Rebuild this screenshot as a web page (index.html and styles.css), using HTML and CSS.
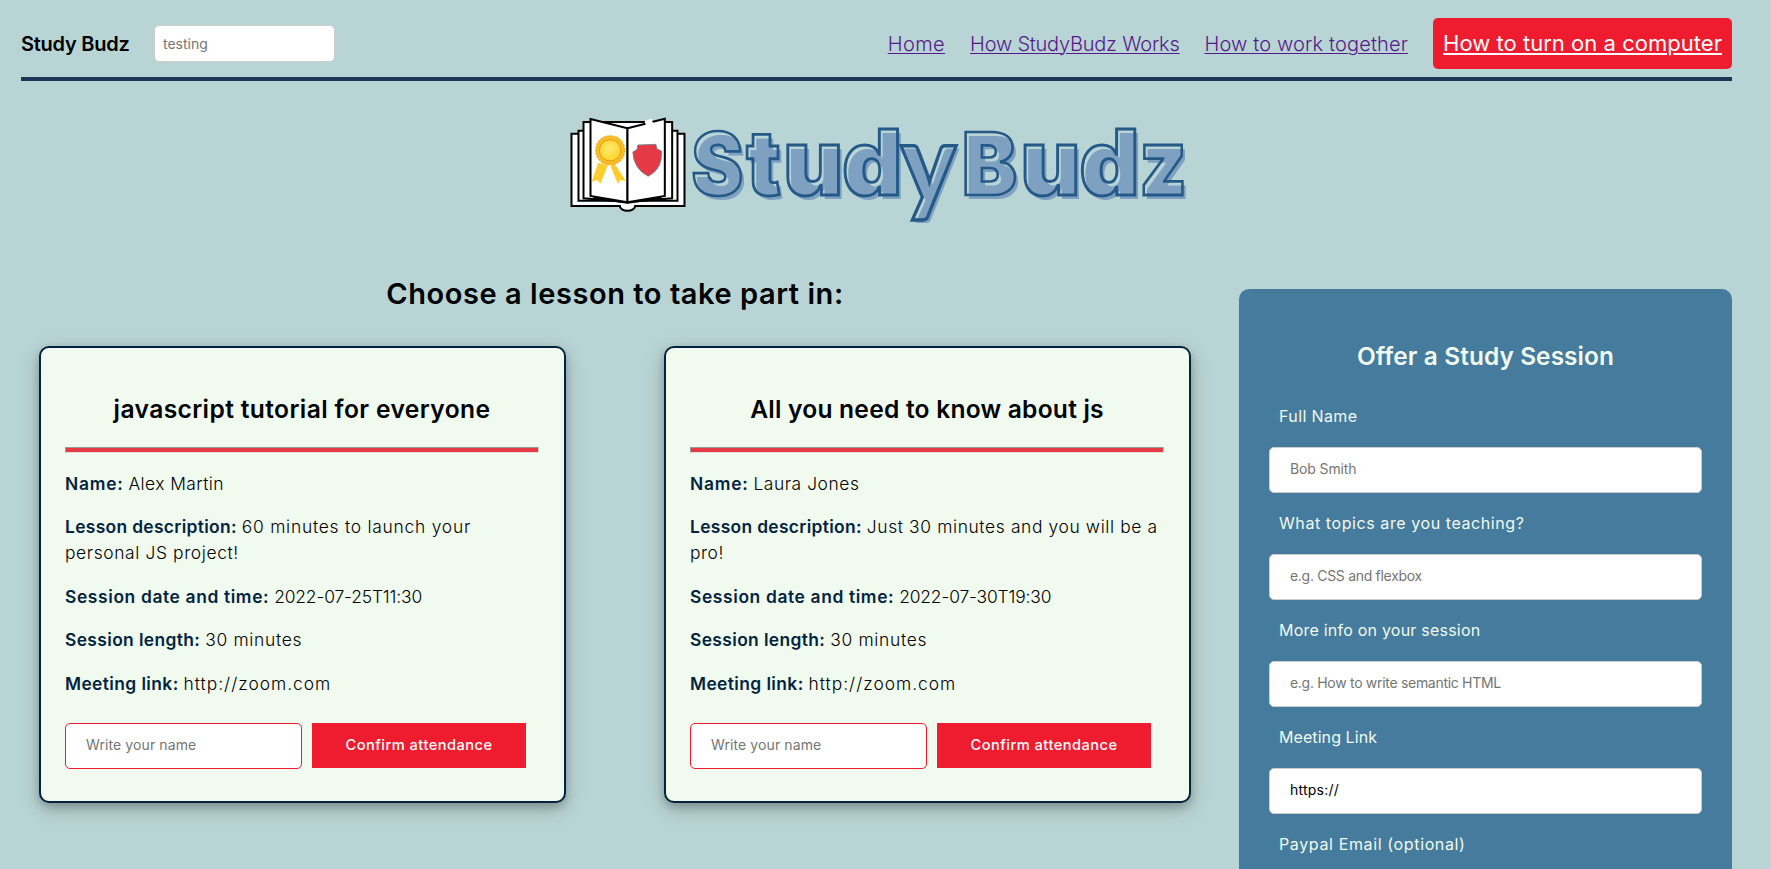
FILE: index.html
```
<!DOCTYPE html>
<html lang="en">
<head>
<meta charset="utf-8">
<title>Study Budz</title>
<link rel="stylesheet" href="styles.css">
</head>
<body>
<header class="header">
  <span class="brand">Study Budz</span>
  <input class="search" placeholder="testing">
  <nav class="nav">
    <a class="ls-40" href="#">Home</a>
    <a class="ls-n22" href="#">How StudyBudz Works</a>
    <a class="ls-14" href="#">How to work together</a>
    <a class="nav-cta" href="#">How to turn on a computer</a>
  </nav>
</header>

<svg class="logo" viewBox="546.5 105 660 130" role="img" aria-label="StudyBudz">
  <defs>
    <radialGradient id="gold" cx=".45" cy=".4" r=".6">
      <stop offset="0" stop-color="#ffe96e"/><stop offset="1" stop-color="#ffd52e"/>
    </radialGradient>
    <g id="word">
      <text transform="translate(691 195.4) scale(.9 1)">S</text>
      <text transform="translate(745.8 195.4) scale(1 1.04)">t</text>
      <text transform="translate(782.8 195.4) scale(1.07 1.06)">u</text>
      <text transform="translate(841.8 195.4) scale(1.08 1.05)">d</text>
      <text class="logo-y" transform="translate(900.6 201.6) scale(1.2 1.27)">y</text>
      <text transform="translate(961.3 195.4) scale(.96 1)">B</text>
      <text transform="translate(1020.1 195.4) scale(1.07 1.06)">u</text>
      <text transform="translate(1079.1 195.4) scale(1.08 1.05)">d</text>
      <text transform="translate(1138.8 195.4) scale(.94 1.06)">z</text>
    </g>
  </defs>
  <g transform="translate(565 110) scale(.3333)" stroke="#000" stroke-width="6" fill="#fff">
    <path d="M18 71h339v217H209a23 14 0 0 1-46 0H18z"/>
    <path d="M39 62h297v210H39z"/>
    <path d="M54 36h266v229l-134 11L54 265z"/>
    <path d="M84 263l102 14 102-14" stroke-width="8"/>
    <path d="M75 27l111 28v222L75 258z"/>
    <path d="M186 55L298 27v231l-112 19z" stroke="none"/>
    <path d="M240 41l22-6V48l-22 4z" stroke="none"/>
    <path d="M238 32l22-6v12l-22 6z" stroke="none"/>
    <path d="M186 55l54-14M262 35l36-9v232l-112 19V55" fill="none"/>
    <path d="M98 158l-19 57 16-6 10 12 22-55zM145 158l36 54-16-2-8 12-21-52z" fill="#ffce2c" stroke="none"/>
    <circle cx="134" cy="121" r="43" fill="#f8bd25" stroke="#f0b01e" stroke-width="5" stroke-dasharray="7 3"/>
    <circle cx="134" cy="121" r="32" fill="#ffd83b" stroke="#dc9d18" stroke-width="3"/>
    <circle cx="134" cy="121" r="27" fill="url(#gold)" stroke="none"/>
    <path d="M112 135l40-35M121 141l34-31" stroke="#fff08a" stroke-width="3" opacity=".5"/>
    <path d="M217 105l54-2 4 14 13 6q4 54-40 76-44-23-46-73l13-8z" fill="#e63946" stroke="#6c8790" stroke-width="2.5"/>
  </g>
  <use class="word-fill-shadow" href="#word" transform="translate(3.2 3.2)"/>
  <use class="word-line" href="#word"/>
</svg>

<main class="main">
  <section class="lessons">
    <h2 class="lessons-title">Choose a lesson to take part in:</h2>
    <div class="cards">
      <article class="card">
        <h3 class="card-title ls-38">javascript tutorial for everyone</h3>
        <hr class="rule">
        <p><b class="ls-76">Name:</b> <span class="ls-44">Alex Martin</span></p>
        <p><b class="ls-33">Lesson description:</b> <span class="ls-76">60 minutes to launch your</span><br><span class="ls-63">personal JS project!</span></p>
        <p><b class="ls-63">Session date and time:</b> <span class="ls-n13">2022-07-25T11:30</span></p>
        <p><b class="ls-38">Session length:</b> <span class="ls-70">30 minutes</span></p>
        <p><b class="ls-40">Meeting link:</b> <span class="ls-100">http://zoom.com</span></p>
        <div class="attend">
          <input class="attend-name" placeholder="Write your name">
          <button class="attend-btn">Confirm attendance</button>
        </div>
      </article>
      <article class="card">
        <h3 class="card-title ls-22">All you need to know about js</h3>
        <hr class="rule">
        <p><b class="ls-76">Name:</b> <span class="ls-58">Laura Jones</span></p>
        <p><b class="ls-33">Lesson description:</b> <span class="ls-63">Just 30 minutes and you will be a</span><br><span class="ls-58">pro!</span></p>
        <p><b class="ls-63">Session date and time:</b> <span class="ls-n13">2022-07-30T19:30</span></p>
        <p><b class="ls-38">Session length:</b> <span class="ls-70">30 minutes</span></p>
        <p><b class="ls-40">Meeting link:</b> <span class="ls-100">http://zoom.com</span></p>
        <div class="attend">
          <input class="attend-name" placeholder="Write your name">
          <button class="attend-btn">Confirm attendance</button>
        </div>
      </article>
    </div>
  </section>

  <form class="offer">
    <h3 class="offer-title">Offer a Study Session</h3>
    <label class="ls-38">Full Name</label>
    <input class="ls-n13" placeholder="Bob Smith">
    <label class="ls-58">What topics are you teaching?</label>
    <input class="ls-n30" placeholder="e.g. CSS and flexbox">
    <label class="ls-22">More info on your session</label>
    <input class="ls-n30" placeholder="e.g. How to write semantic HTML">
    <label class="ls-8">Meeting Link</label>
    <input class="ls-22" value="https://">
    <label class="ls-63">Paypal Email (optional)</label>
  </form>
</main>
</body>
</html>
```
FILE: styles.css
```
* { box-sizing: border-box; }
body {
  margin: 0;
  height: 869px;
  overflow: hidden;
  padding: 18px 39px 0 21px;
  background: #b9d4d4;
  color: #000;
  font-family: Inter, sans-serif;
  font-weight: 300;
}
h2, h3, p { margin: 0; }
input, button { font-family: inherit; }
input {
  height: 46px;
  padding: 0 20px 3px;
  border: 1px solid #ccc;
  border-radius: 5px;
  background: #fff;
  color: #000;
  font-size: 14px;
  font-weight: 400;
}
input::placeholder { color: #757575; }

.header {
  display: flex;
  align-items: center;
  height: 63px;
  padding-bottom: 8px;
  border-bottom: 4px solid #1d3557;
}
.brand {
  width: 133px;
  font-size: 20px;
  font-weight: 600;
  letter-spacing: -.25px;
}
.search {
  width: 181px;
  height: 37px;
  padding: 0 8px;
}
.nav {
  display: flex;
  align-items: center;
  gap: 25px;
  margin-left: auto;
  font-size: 20px;
}
.nav a {
  color: #551a8b;
  text-decoration-thickness: 1px;
  text-underline-offset: 2px;
}
.nav .nav-cta {
  height: 51px;
  padding: 0 10px;
  border-radius: 5px;
  background: #ee1c2e;
  color: #fff;
  font-size: 22px;
  font-weight: 400;
  line-height: 51px;
  letter-spacing: .03px;
  text-decoration-thickness: 2px;
}

.logo {
  display: block;
  width: 660px;
  height: 130px;
  margin: 24px auto 0;
  font: 900 86px Inter, sans-serif;
}
.logo-y { font: 900 86px Lato, sans-serif; }
.word-fill-shadow { fill: #7fa1c1; stroke: none; }
.word-line { fill: none; stroke: #255a88; stroke-width: 2.7px; }

.main {
  display: grid;
  grid-template-columns: 1188px 493px;
  gap: 30px;
  align-items: start;
  height: 597px;
  margin-top: 37px;
}
.lessons-title {
  padding-top: 1px;
  font-size: 29px;
  font-weight: 600;
  line-height: 41px;
  letter-spacing: .56px;
  text-align: center;
}
.cards {
  display: flex;
  justify-content: space-between;
  margin-top: 32px;
  padding: 0 18px;
}
.card {
  width: 527px;
  height: 457px;
  padding: 43px 25px 0 24px;
  border: 2px solid #032440;
  border-radius: 10px;
  background: #f1faee;
  box-shadow: 0 4px 8px rgba(0, 0, 0, .2), 0 6px 20px rgba(0, 0, 0, .19);
}
.card-title {
  padding-top: 1px;
  font-size: 24.6px;
  font-weight: 600;
  line-height: 35px;
  text-align: center;
}
.rule {
  height: 6px;
  margin: 20px 0 17.5px;
  border: 1px solid;
  border-color: #999 #e8dcd6 #e8dcd6 #999;
  background: #e63946;
}
.card p {
  margin-bottom: 17.4px;
  font-size: 17.4px;
  line-height: 26.1px;
  white-space: nowrap;
}
.card b { color: #032440; font-weight: 600; }
.attend {
  display: flex;
  align-items: flex-start;
  gap: 10px;
  margin-top: 26px;
}
.attend-name {
  width: 237px;
  padding-bottom: 2px;
  border-color: #ee1c2e;
  letter-spacing: .1px;
}
.attend-btn {
  width: 214px;
  height: 45px;
  padding: 0 0 1px;
  border: 0;
  background: #ee1c2e;
  color: #fff;
  font-size: 14.6px;
  font-weight: 500;
  letter-spacing: .48px;
}

.offer {
  display: flex;
  flex-direction: column;
  height: 640px;
  margin-top: 17px;
  padding: 49px 30px 0;
  border-radius: 10px 10px 0 0;
  background: #457b9d;
  color: #f1faee;
}
.main .offer { height: 580px; }
.offer-title {
  margin-bottom: 30px;
  padding-top: 1px;
  font-size: 24.4px;
  font-weight: 600;
  line-height: 35px;
  letter-spacing: .1px;
  text-align: center;
}
.offer label {
  padding-left: 10px;
  font-size: 16px;
  font-weight: 400;
  line-height: 24px;
}
.offer input { flex: none; margin: 19px 0 18px; }

.ls-n30 { letter-spacing: -.3px; }
.ls-n22 { letter-spacing: -.22px; }
.ls-n13 { letter-spacing: -.13px; }
.ls-8 { letter-spacing: .08px; }
.ls-14 { letter-spacing: .14px; }
.ls-22 { letter-spacing: .22px; }
.ls-33 { letter-spacing: .33px; }
.ls-38 { letter-spacing: .38px; }
.ls-40 { letter-spacing: .4px; }
.ls-44 { letter-spacing: .44px; }
.ls-58 { letter-spacing: .58px; }
.ls-63 { letter-spacing: .63px; }
.ls-70 { letter-spacing: .7px; }
.ls-76 { letter-spacing: .76px; }
.ls-100 { letter-spacing: 1px; }
```
